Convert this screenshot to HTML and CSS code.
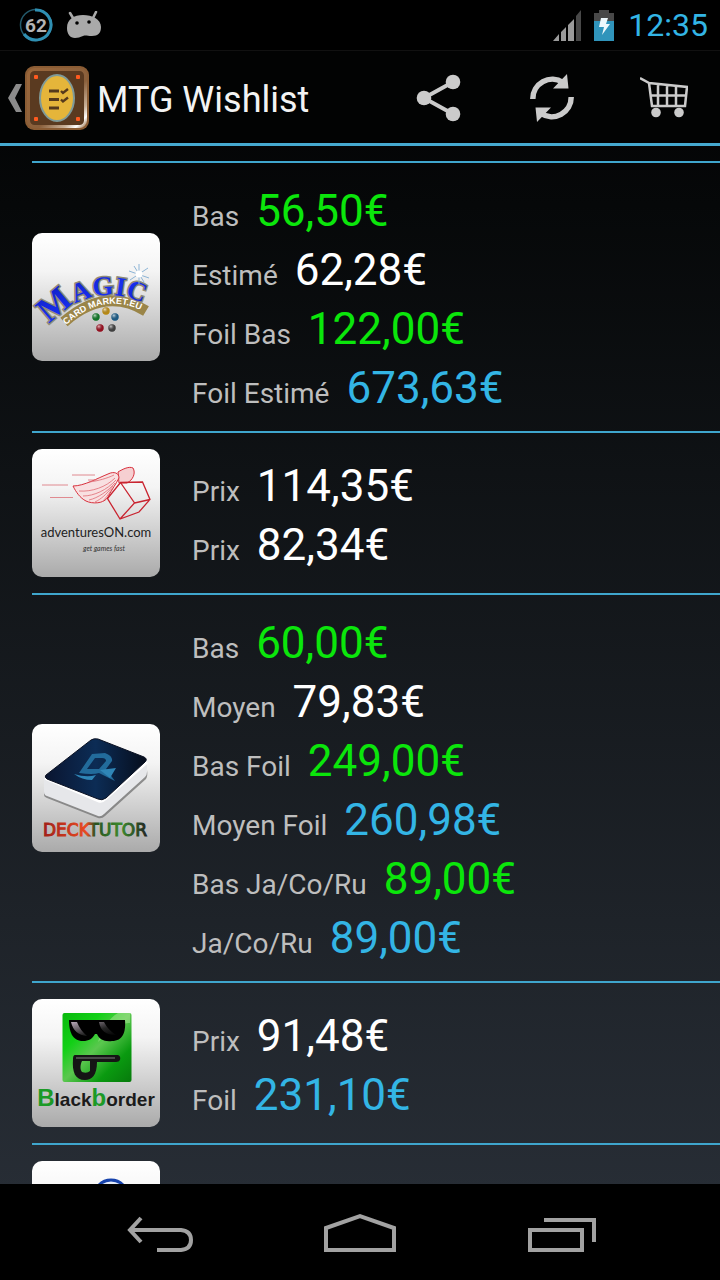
FILE: index.html
```html
<!DOCTYPE html>
<html lang="fr">
<head>
<meta charset="utf-8">
<meta name="viewport" content="width=device-width, initial-scale=1">
<title>MTG Wishlist</title>
<link rel="stylesheet" href="styles.css">
</head>
<body>
<div class="status">
  <svg class="ring" viewBox="0 0 36 36" aria-hidden="true"><circle cx="18" cy="18" r="15.5" fill="none" stroke="#235a6c" stroke-width="1.5"/><path d="M17 3A15 15 0 1 1 6 27" fill="none" stroke="#2f8fb2" stroke-width="3"/><text x="18" y="25" text-anchor="middle" class="ring-text">62</text></svg>
  <svg class="droid" viewBox="0 0 36 28" aria-hidden="true"><path d="M4 2l3 5M30 1l-3 6" stroke="#a9a9a9" stroke-width="2.600" stroke-linecap="round"/><path d="M1 17C1 8 8 4 17 4s18 4 18 12c0 6-3 9-9 9-5 0-6-1-9 0s-5 2-8 2c-5 0-8-4-8-10z" fill="#a9a9a9"/><circle cx="11" cy="12" r="1.800"/><circle cx="23" cy="11" r="1.800"/></svg>
  <span class="grow"></span>
  <svg class="signal" viewBox="0 0 30 32" aria-hidden="true"><path d="M1 32L7 25V32zM9 23L14 18V32H9zM16 16L22 10V32H16z" fill="#9b9b9b"/><path d="M24 7L29 1V32H24z" fill="#484848"/></svg>
  <svg class="battery" viewBox="0 0 20 32" aria-hidden="true"><path d="M0 4H5V1H15V4H20V12H0z" fill="#484848"/><path d="M0 12H20V32H0z" fill="#3094bb"/><path d="M7 9H14L12 15H16L8 26L10 18H5z" fill="#eef8fc"/></svg>
  <time class="clock">12:35</time>
</div>
<header class="bar">
  <a class="home" href="#">
    <svg class="chevron" viewBox="0 0 14 28" aria-hidden="true"><path d="M8 0H14L7 14L14 28H8L0 14z" fill="#8b8b8b"/></svg>
    <svg class="app" viewBox="0 0 64 64" aria-hidden="true">
      <defs><linearGradient id="frame" x1="0" y1="0" x2="1" y2="1"><stop offset="0" stop-color="#9a673b"/><stop offset=".6" stop-color="#8a603c"/><stop offset=".82" stop-color="#c9b199"/><stop offset=".92" stop-color="#fff"/><stop offset="1" stop-color="#a5835f"/></linearGradient></defs>
      <rect x="0" y="0" width="64" height="64" rx="9" fill="#8a5c34"/><rect x="3.500" y="3.500" width="57" height="57" rx="6" fill="#5a3a20" stroke="url(#frame)" stroke-width="3"/>
      <g fill="#ff5a1f"><rect x="9" y="9" width="4" height="4" rx="1"/><rect x="51" y="9" width="4" height="4" rx="1"/><rect x="9" y="51" width="4" height="4" rx="1"/><rect x="51" y="51" width="4" height="4" rx="1"/></g>
      <ellipse cx="32" cy="32" rx="17" ry="23" fill="#e5b53a" stroke="#7f9a98" stroke-width="2"/>
      <path d="M24 25H34M24 33.500H34M24 42H34" stroke="#563a1c" stroke-width="3"/><path d="M36 25l2 2 5-4M36 33.500l2 2 5-4" fill="none" stroke="#563a1c" stroke-width="2.400"/>
    </svg>
    <h1 class="title">MTG Wishlist</h1>
  </a>
  <button class="action" type="button" aria-label="Partager"><svg class="glyph" viewBox="0 0 48 48"><path d="M37 8L8 24L37 40" fill="none" stroke="#cbcbcb" stroke-width="4"/><g fill="#cbcbcb"><circle cx="37" cy="8" r="7.300"/><circle cx="8" cy="24" r="7.300"/><circle cx="37" cy="40" r="7.300"/></g></svg></button>
  <button class="action" type="button" aria-label="Actualiser"><svg class="glyph" viewBox="0 0 48 48"><g fill="none" stroke="#cbcbcb" stroke-width="5.500"><path d="M4.800 25A19.500 19.500 0 0 1 35 8.500"/><path d="M43.200 23A19.500 19.500 0 0 1 13 39.500"/></g><path d="M39 0L40.500 14.500H25zM9 48L7.500 33.500H23z" fill="#cbcbcb"/></svg></button>
  <button class="action" type="button" aria-label="Panier"><svg class="glyph" viewBox="0 0 48 48"><g fill="none" stroke="#cbcbcb" stroke-width="2.500"><path d="M0 4L9 9L12 32H45L47 13L9 9M10 21.500H46M18 10V32M27 11V32M36 12V32"/></g><g fill="#cbcbcb"><circle cx="16" cy="38.500" r="4.800"/><circle cx="39" cy="38.500" r="4.800"/></g></svg></button>
</header>
<main class="content">
<ul class="shops">
  <li class="shop">
    <svg class="logo" viewBox="0 0 128 128" role="img" aria-label="Magic Card Market">
      <defs><path id="arcA" d="M18 92C38 66 82 46 126 80"/><path id="arcB" d="M34 92Q74 56 116 81"/>
      <linearGradient id="blue" x1="0" y1="0" x2="1" y2="1"><stop offset="0" stop-color="#0a12a8"/><stop offset=".5" stop-color="#1830f0"/><stop offset="1" stop-color="#0a12a8"/></linearGradient>
      <radialGradient id="shine" cx=".35" cy=".3"><stop offset="0" stop-color="#fff" stop-opacity=".7"/><stop offset="1" stop-color="#000" stop-opacity=".25"/></radialGradient></defs>
      <path d="M32 89Q73 53 114 78" fill="none" stroke="#9a8548" stroke-width="11"/>
      <text class="magic-text"><textPath href="#arcA"><tspan class="magic-big">M</tspan>AGIC</textPath></text>
      <text class="card-text"><textPath href="#arcB">CARD MARKET.EU</textPath></text>
      <path d="M107 31V51M97 38L117 45M98 47L116 35M102 33L112 49" stroke="#8cb4d6" stroke-width="1"/><circle cx="107" cy="41" r="3.500" fill="#fff"/>
      <circle cx="64" cy="84" r="3.700" fill="#179a35"/><circle cx="74" cy="78" r="3.700" fill="#f2b51c"/><circle cx="83" cy="84" r="3.700" fill="#2577ae"/><circle cx="68" cy="95" r="3.700" fill="#c4152a"/><circle cx="80" cy="95" r="3.700" fill="#555"/>
      <g fill="url(#shine)"><circle cx="64" cy="84" r="3.700"/><circle cx="74" cy="78" r="3.700"/><circle cx="83" cy="84" r="3.700"/><circle cx="68" cy="95" r="3.700"/><circle cx="80" cy="95" r="3.700"/></g>
    </svg>
    <dl class="prices">
      <div class="price"><dt>Bas</dt><dd class="low">56,50€</dd></div>
      <div class="price"><dt>Estimé</dt><dd>62,28€</dd></div>
      <div class="price"><dt>Foil Bas</dt><dd class="low">122,00€</dd></div>
      <div class="price"><dt>Foil Estimé</dt><dd class="foil">673,63€</dd></div>
    </dl>
  </li>
  <li class="shop">
    <svg class="logo" viewBox="0 0 128 128" role="img" aria-label="adventuresON.com">
      <path d="M40 26H63M10 36H36M18 48.500H41" stroke="#e08a90" stroke-width="1"/>
      <path d="M86 23C91 20 97 17 101 19C104 24 101 31 95 34H87z" fill="#f6cfd1" stroke="#d8303c"/>
      <path d="M41 37C52 37 66 29 76 25C82 22 87 24 87 29C84 35 80 40 76 48C72 55 60 55 54 52C48 49 44 43 41 37z" fill="#f8e0e1" stroke="#d8303c"/>
      <path d="M56 31L64 31M47 42C60 43 74 38 83 29M51 47C62 47 75 41 84 31M57 51C66 49 76 42 83 34M63 53C69 50 74 46 81 37M70 53C73 50 76 46 80 40M57 33C66 32 76 29 82 26" fill="none" stroke="#df6b73" stroke-width=".8"/>
      <path d="M88.500 33.500L110.500 33L118 50.500L107 63L88 70L75.500 49.500zM88.500 33.500L102.500 54L88 70M102.500 54L118 50.500" fill="none" stroke="#c92430" stroke-width="1.300"/>
      <text x="64" y="88" text-anchor="middle" class="adv-text">adventuresON.com</text>
      <text x="72" y="102" text-anchor="middle" class="adv-sub">get games fast</text>
    </svg>
    <dl class="prices">
      <div class="price"><dt>Prix</dt><dd>114,35€</dd></div>
      <div class="price"><dt>Prix</dt><dd>82,34€</dd></div>
    </dl>
  </li>
  <li class="shop">
    <svg class="logo" viewBox="0 0 128 128" role="img" aria-label="DeckTutor">
      <defs><linearGradient id="deck" x1="0" y1="0" x2="1" y2="0"><stop offset="0" stop-color="#0a1530"/><stop offset=".5" stop-color="#0c2c55"/><stop offset="1" stop-color="#060d1c"/></linearGradient>
      <linearGradient id="word" x1="0" y1="0" x2="1" y2="0"><stop offset="0" stop-color="#a02018"/><stop offset=".42" stop-color="#ea4a20"/><stop offset=".5" stop-color="#28501f"/><stop offset=".75" stop-color="#3b8a2c"/><stop offset="1" stop-color="#222"/></linearGradient></defs>
      <path d="M12 56V71Q12 73 15 74L66 94Q70 95 73 92L114 55Q116 52 115 46V40z" fill="#777" opacity=".8"/>
      <path d="M12 52V68Q12 71 15 72L66 92Q69 93 72 90L113 53Q115 51 115 48V36L70 70z" fill="#e6e7ea"/>
      <path d="M13 54L67 77Q70 78 73 75L115 38" fill="none" stroke="#fff" stroke-width="3"/>
      <path d="M14 51L59 16Q62 14 66 15L112 33Q116 35 113 38L74 74Q70 77 66 75L15 55Q12 53 14 51z" fill="url(#deck)" stroke="#0c1223"/>
      <path d="M47 49L60 30L73 29Q81 32 80 37L74 45L83 57L67 49Q61 51 47 49zM55 45L67 45L74 37Q74 34 70 34L63 34z" fill="#226b9b" fill-rule="evenodd"/><path d="M42 50Q55 54 64 51L60 56Q50 56 42 50zM68 46L84 44L78 54z" fill="#2f86b7"/>
      <text x="63" y="112" text-anchor="middle" class="deck-text">DECKTUTOR</text>
    </svg>
    <dl class="prices">
      <div class="price"><dt>Bas</dt><dd class="low">60,00€</dd></div>
      <div class="price"><dt>Moyen</dt><dd>79,83€</dd></div>
      <div class="price"><dt>Bas Foil</dt><dd class="low">249,00€</dd></div>
      <div class="price"><dt>Moyen Foil</dt><dd class="foil">260,98€</dd></div>
      <div class="price"><dt>Bas Ja/Co/Ru</dt><dd class="low">89,00€</dd></div>
      <div class="price"><dt>Ja/Co/Ru</dt><dd class="foil">89,00€</dd></div>
    </dl>
  </li>
  <li class="shop">
    <svg class="logo" viewBox="0 0 128 128" role="img" aria-label="Blackborder">
      <defs><linearGradient id="face" x1="0" y1="0" x2="1" y2="1"><stop offset="0" stop-color="#08b80c"/><stop offset=".28" stop-color="#12d016"/><stop offset=".5" stop-color="#5bc74f"/><stop offset=".75" stop-color="#0a9a10"/><stop offset="1" stop-color="#077a0c"/></linearGradient>
      <linearGradient id="lens" x1="0" y1="0" x2="1" y2="1"><stop offset="0" stop-color="#b7a8b7"/><stop offset=".6" stop-color="#222"/><stop offset="1" stop-color="#000"/></linearGradient></defs>
      <rect x="30.500" y="14" width="69" height="69" rx="2" fill="url(#face)"/><path d="M86 14H98V24C88 23 75 34 66 43C70 30 76 20 86 14z" fill="#c6efad" opacity=".4"/>
      <path d="M37 21H93C94 33 91 42 80 42C72 43 67 40 65 35H63C60 40 57 42 51 42C40 42 37 32 37 21z" fill="#000"/><path d="M39 23H45Q48 31 55 37Q42 36 39 23zM67 23H72Q76 31 84 36Q69 36 67 23z" fill="url(#lens)"/>
      <path d="M43 56H86Q89 57 88 61Q87 63 84 63H65C65 76 60 81 53 81C43 81 40 73 41 60Q41 56 43 56zM50 62C48 66 48 71 50 73Q55 75 58 72V62z" fill="#151515" fill-rule="evenodd"/><path d="M44 59H83" stroke="#5b5b5b" stroke-width="1.500"/>
      <text x="64" y="107" text-anchor="middle" class="bb-text"><tspan class="bb-big">B</tspan>lack<tspan class="bb-big">b</tspan>order</text>
    </svg>
    <dl class="prices">
      <div class="price"><dt>Prix</dt><dd>91,48€</dd></div>
      <div class="price"><dt>Foil</dt><dd class="foil">231,10€</dd></div>
    </dl>
  </li>
  <li class="shop">
    <svg class="logo" viewBox="0 0 128 128" aria-hidden="true"><ellipse cx="79" cy="36" rx="17" ry="17" fill="#e4ecfa" stroke="#1642ac" stroke-width="3"/></svg>
  </li>
</ul>
</main>
<nav class="nav">
  <button class="key" type="button" aria-label="Retour"><svg class="key-icon" viewBox="0 0 72 44"><path d="M19 8L8 20L19 32M8 20H59Q69 21 69 30T59 40H35" fill="none" stroke="#a2a2a2" stroke-width="4"/></svg></button>
  <button class="key" type="button" aria-label="Accueil"><svg class="key-icon" viewBox="0 0 72 44"><path d="M2 40V18L36 6L70 18V40z" fill="none" stroke="#a2a2a2" stroke-width="4"/></svg></button>
  <button class="key" type="button" aria-label="Applications récentes"><svg class="key-icon" viewBox="0 0 72 44"><path d="M4 20H56V40H4zM18 10H68V32" fill="none" stroke="#a2a2a2" stroke-width="4"/></svg></button>
</nav>
</body>
</html>
```
FILE: styles.css
```css
* {
  box-sizing: border-box;
}

body {
  margin: 0;
  height: 100vh;
  display: flex;
  flex-direction: column;
  background: linear-gradient(#000 0%, #060809 16%, #272d35 93%);
  color: #fff;
  font-family: Roboto, "Noto Sans", sans-serif;
}

button {
  margin: 0;
  padding: 0;
  border: 0;
  background: none;
}

.status {
  flex: none;
  height: 50px;
  padding: 0 12px 0 18px;
  display: flex;
  align-items: center;
  background: #000;
}

.ring {
  width: 36px;
  height: 36px;
  margin-right: 12px;
}

.ring-text {
  font-size: 19px;
  font-weight: 700;
  fill: #b4b4b4;
}

.droid {
  width: 36px;
  height: 28px;
}

.grow {
  flex: 1;
}

.signal {
  width: 30px;
  height: 32px;
  margin-right: 12px;
}

.battery {
  width: 20px;
  height: 32px;
  margin-right: 14px;
}

.clock {
  font-size: 32px;
  line-height: 52px;
  color: #33b5e5;
}

.bar {
  flex: none;
  height: 96px;
  padding-top: 2px;
  display: flex;
  align-items: stretch;
  border-top: 1px solid #111;
  border-bottom: 3px solid #45a9d0;
  background: #020303;
}

.home {
  flex: 1;
  padding-left: 8px;
  display: flex;
  align-items: center;
  color: #f3f3f3;
  text-decoration: none;
}

.chevron {
  width: 14px;
  height: 28px;
  margin-right: 3px;
}

.app {
  width: 64px;
  height: 64px;
  margin-right: 8px;
}

.title {
  margin: 0;
  padding-top: 4px;
  font-size: 36px;
  font-weight: 400;
  white-space: nowrap;
}

.action {
  width: 112px;
  display: flex;
  align-items: center;
  justify-content: center;
}

.glyph {
  width: 48px;
  height: 48px;
}

.content {
  flex: 1;
  min-height: 0;
  overflow: hidden;
}

.shops {
  margin: 0;
  padding: 15px 0 0 32px;
  list-style: none;
}

.shop {
  padding: 16px 0;
  display: flex;
  align-items: center;
  gap: 32px;
  border-top: 2px solid #3fa6cd;
}

.logo {
  flex: none;
  width: 128px;
  height: 128px;
  border-radius: 10px;
  background: linear-gradient(#fff 0%, #f4f4f4 30%, #aaa 100%);
}

.prices {
  margin: 0;
}

.price {
  height: 59px;
  padding-top: 5px;
  display: flex;
  align-items: baseline;
  gap: 17px;
  line-height: 54px;
}

.price dt {
  font-size: 28px;
  color: #bebebe;
}

.price dd {
  margin: 0;
  font-size: 44px;
}

.price .low {
  color: #0be60b;
}

.price .foil {
  color: #33b5e5;
}

.magic-text {
  font: 700 27px "Liberation Serif", serif;
  fill: url(#blue);
  stroke: #8f8b78;
  stroke-width: 3px;
  paint-order: stroke;
}

.magic-big {
  font-size: 35px;
}

.card-text {
  font: 700 9px "Liberation Sans", sans-serif;
  fill: #fff;
}

.adv-text {
  font: 400 13px Lato, sans-serif;
  fill: #222;
}

.adv-sub {
  font: italic 400 7px Lato, sans-serif;
  fill: #333;
}

.deck-text {
  font: 400 17px "DejaVu Sans", sans-serif;
  fill: url(#word);
  stroke: url(#word);
  stroke-width: 1px;
}

.bb-text {
  font: 700 19px "Liberation Sans", sans-serif;
  fill: #1b1b1b;
}

.bb-big {
  font-size: 24px;
  fill: #1c9a27;
}

.nav {
  flex: none;
  height: 96px;
  display: flex;
  justify-content: center;
  background: #000;
}

.key {
  width: 28%;
  display: flex;
  align-items: center;
  justify-content: center;
}

.key-icon {
  width: 72px;
  height: 44px;
}
```
